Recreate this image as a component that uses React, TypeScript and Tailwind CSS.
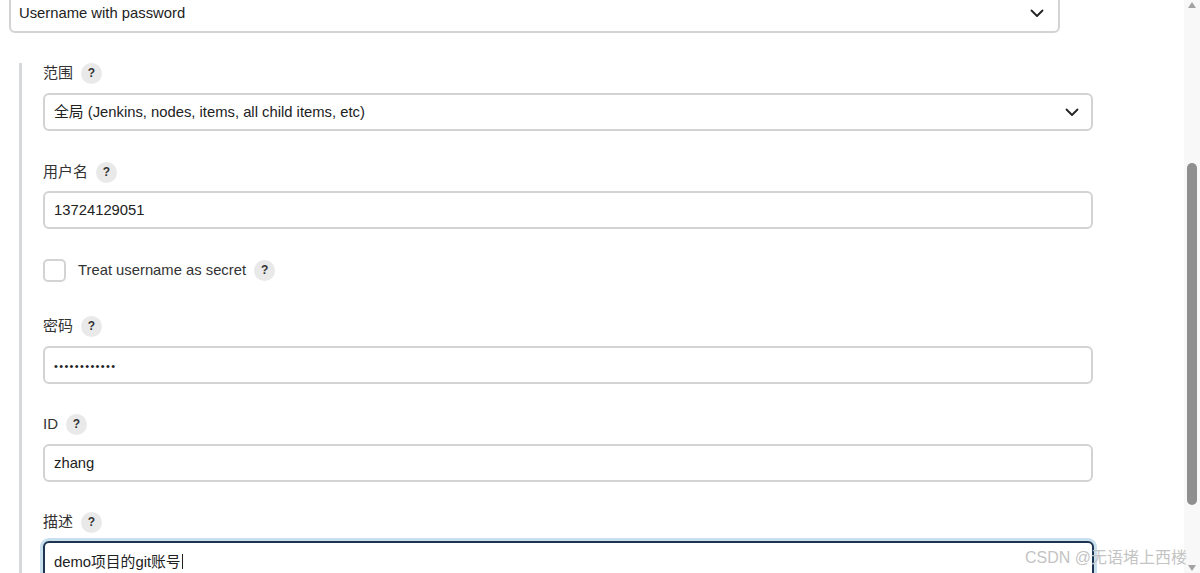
import React from "react";

const font = { fontFamily: '"Liberation Sans", Arial, "Noto Sans CJK SC", sans-serif' };

function Help() {
  return (
    <span className="ml-[8px] inline-flex h-[21px] w-[21px] items-center justify-center rounded-full bg-[#e9e9e9] text-[12px] font-bold text-[#333]">
      ?
    </span>
  );
}

function Label({ text }: { text: string }) {
  return (
    <div className="flex h-[20px] items-center text-[15px] text-[#333]">
      <span>{text}</span>
      <Help />
    </div>
  );
}

function Chevron() {
  return (
    <svg width="14" height="9" viewBox="0 0 14 9" fill="none">
      <path d="M1.5 1.5L7 7L12.5 1.5" stroke="#222" strokeWidth="1.8" strokeLinecap="round" strokeLinejoin="round" />
    </svg>
  );
}

function Box({ children, right }: { children: React.ReactNode; right?: React.ReactNode }) {
  return (
    <div className="flex h-[38px] w-[1050px] items-center justify-between rounded-[6px] border-2 border-[#d3d3d3] bg-white pl-[9px] pr-[12px] text-[14.8px] text-[#222]">
      <span>{children}</span>
      {right}
    </div>
  );
}

export default function App() {
  return (
    <div className="relative h-[573px] w-[1200px] overflow-hidden bg-white" style={font}>
      <div className="flex h-full">
        <div className="flex-1 pl-[9px]">
          <div className="mt-[-6px] flex h-[39px] w-[1051px] items-center justify-between rounded-[6px] border-2 border-[#d3d3d3] pl-[8px] pr-[14px] text-[14.8px] text-[#222]">
            <span>Username with password</span>
            <Chevron />
          </div>
          <div className="ml-[10px] mt-[30px] border-l-[3px] border-[#d6d8da] pl-[21px]">
            <Label text="范围" />
            <div className="mt-[10px]">
              <Box right={<Chevron />}>全局 (Jenkins, nodes, items, all child items, etc)</Box>
            </div>
            <div className="mt-[31px]">
              <Label text="用户名" />
            </div>
            <div className="mt-[9px]">
              <Box>13724129051</Box>
            </div>
            <div className="mt-[29px] flex h-[24px] items-center text-[14.8px] text-[#333]">
              <span className="h-[23px] w-[23px] rounded-[5px] border-2 border-[#d3d3d3] bg-white" />
              <span className="ml-[12px]">Treat username as secret</span>
              <Help />
            </div>
            <div className="mt-[34px]">
              <Label text="密码" />
            </div>
            <div className="mt-[10px]">
              <Box>
                <span className="text-[11px] tracking-[1.35px]">••••••••••••</span>
              </Box>
            </div>
            <div className="mt-[30px]">
              <Label text="ID" />
            </div>
            <div className="mt-[10px]">
              <Box>zhang</Box>
            </div>
            <div className="mt-[30px]">
              <Label text="描述" />
            </div>
            <div className="mt-[6px] w-[1057px] rounded-[9px] bg-[#c8dfee] p-[3px] ml-[-3px]">
              <div className="h-[60px] rounded-[6px] border-2 border-[#1d3550] bg-white pl-[9px] pt-[8px] text-[14.8px] text-[#222]">
                demo项目的git账号<span className="ml-[1px] inline-block h-[15px] w-[1px] bg-[#222] align-[-2px]" />
              </div>
            </div>
          </div>
        </div>
        <div className="relative w-[16px] bg-[#f8f8f8]">
          <div className="absolute left-[4px] top-[2px] h-0 w-0 border-x-[4px] border-b-[6px] border-x-transparent border-b-[#a3a3a3]" />
          <div className="absolute left-[3px] top-[163px] h-[342px] w-[10px] rounded-full bg-[#8f8f8f]" />
          <div className="absolute bottom-[2px] left-[4px] h-0 w-0 border-x-[4px] border-t-[6px] border-x-transparent border-t-[#a3a3a3]" />
        </div>
      </div>
      <div className="absolute left-[1025px] top-[546px] text-[16px] text-[#c4c4c4]">
        CSDN @无语堵上西楼
      </div>
    </div>
  );
}
